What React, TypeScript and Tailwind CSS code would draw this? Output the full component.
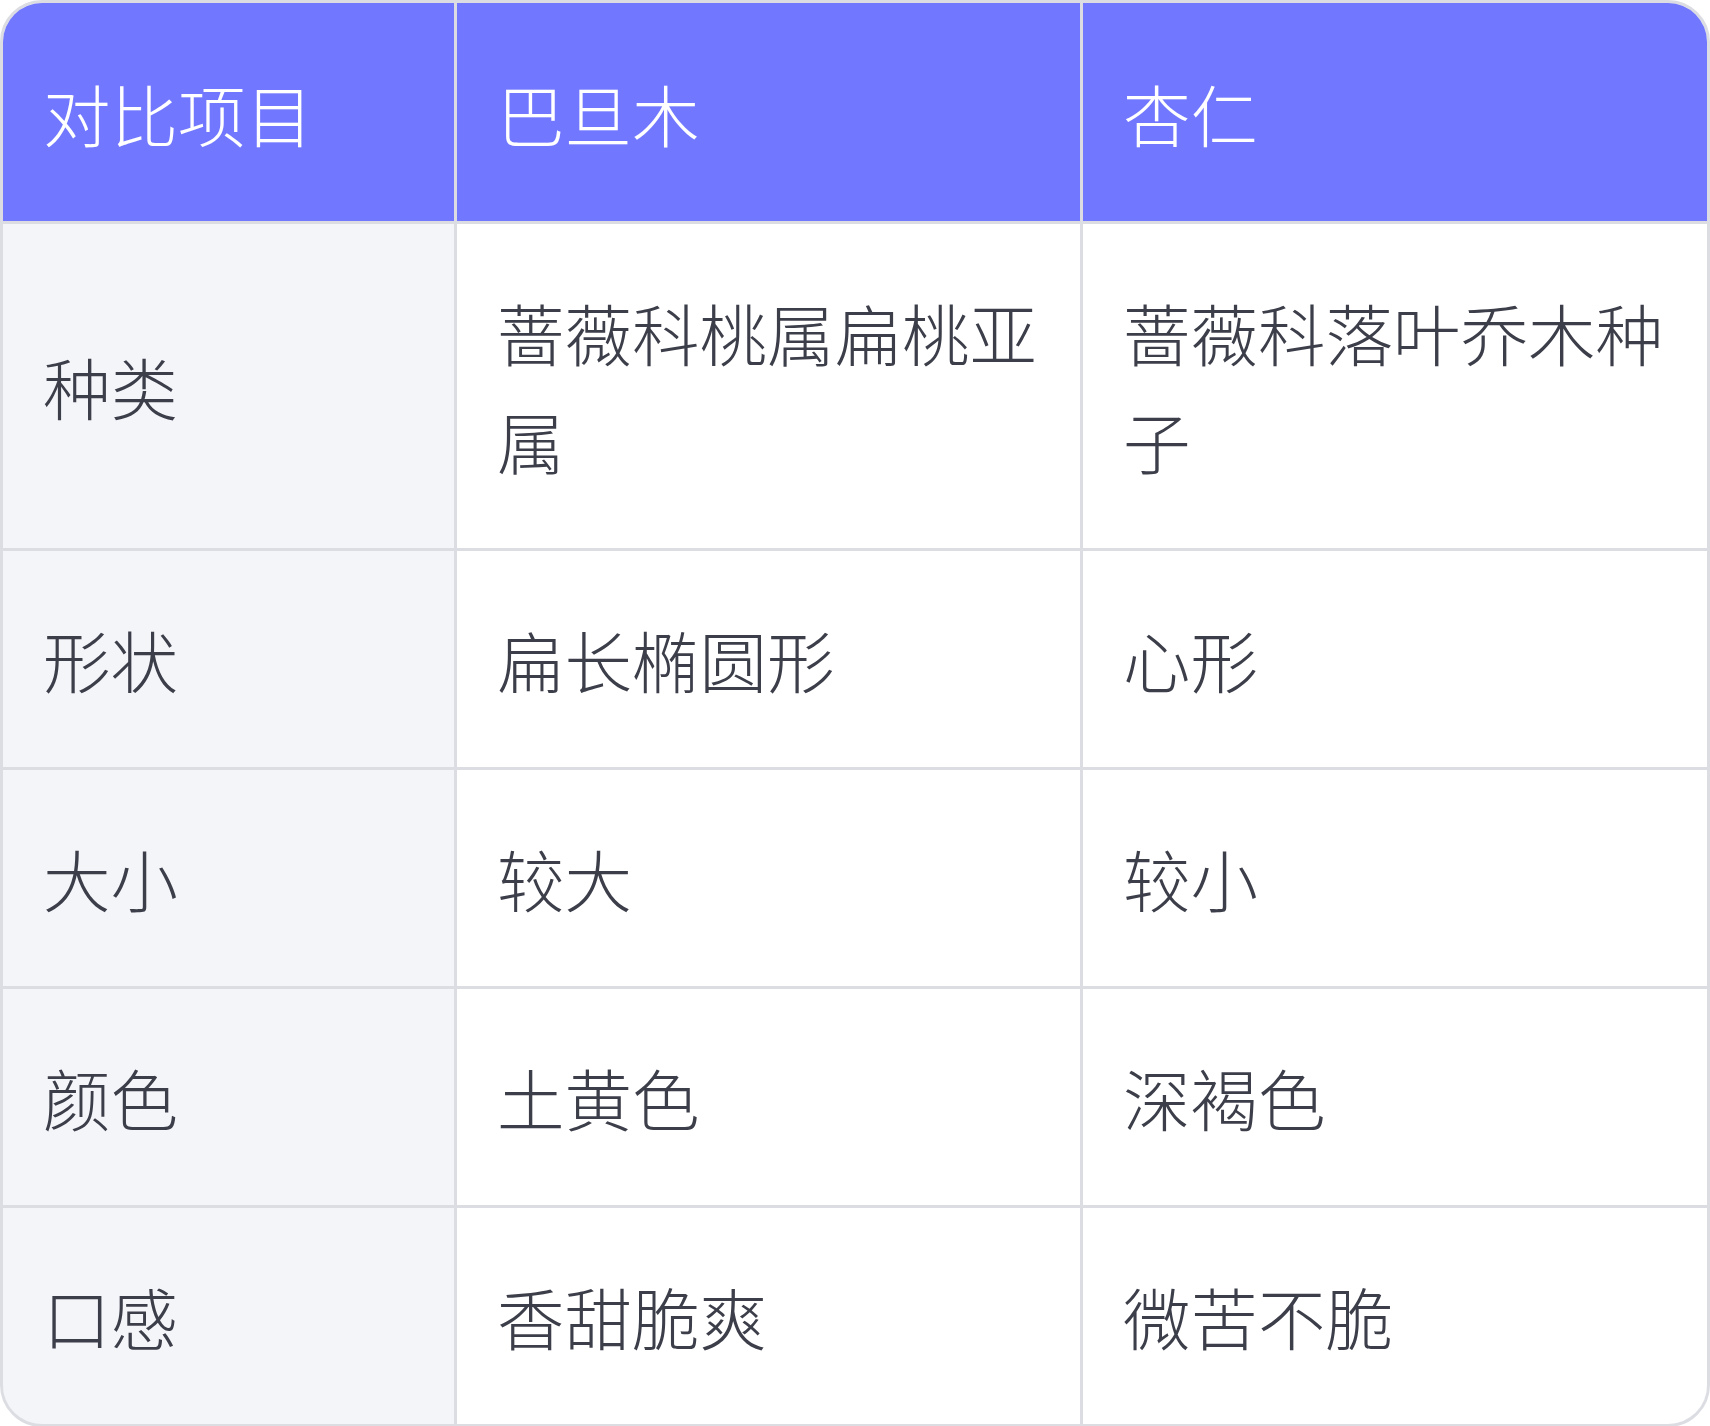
const header = ["对比项目", "巴旦木", "杏仁"];

const rows = [
  ["种类", "蔷薇科桃属扁桃亚属", "蔷薇科落叶乔木种子"],
  ["形状", "扁长椭圆形", "心形"],
  ["大小", "较大", "较小"],
  ["颜色", "土黄色", "深褐色"],
  ["口感", "香甜脆爽", "微苦不脆"],
];

export default function App() {
  return (
    <div
      className="w-[1710px] h-[1426px] bg-white"
      style={{ fontFamily: '"Noto Sans CJK SC", "Noto Sans", sans-serif' }}
    >
      <div className="overflow-hidden rounded-[42px] border-[3px] border-[#dcdde3]">
        <div className="grid grid-cols-[451px_623px_1fr] gap-[3px] bg-[#dcdde3] text-[67.5px] font-light leading-[108px]">
          {header.map((h) => (
            <div
              key={h}
              className="flex items-center bg-[#7177ff] px-[40px] pt-[55px] pb-[54px] leading-[109px] text-white"
            >
              {h}
            </div>
          ))}
          {rows.map((row) =>
            row.map((cell, i) => (
              <div
                key={row[0] + i}
                className={
                  "flex items-center px-[40px] py-[54px] text-[#3c3e4a] " +
                  (i === 0 ? "bg-[#f4f5f9]" : "bg-white")
                }
              >
                {cell}
              </div>
            ))
          )}
        </div>
      </div>
    </div>
  );
}
